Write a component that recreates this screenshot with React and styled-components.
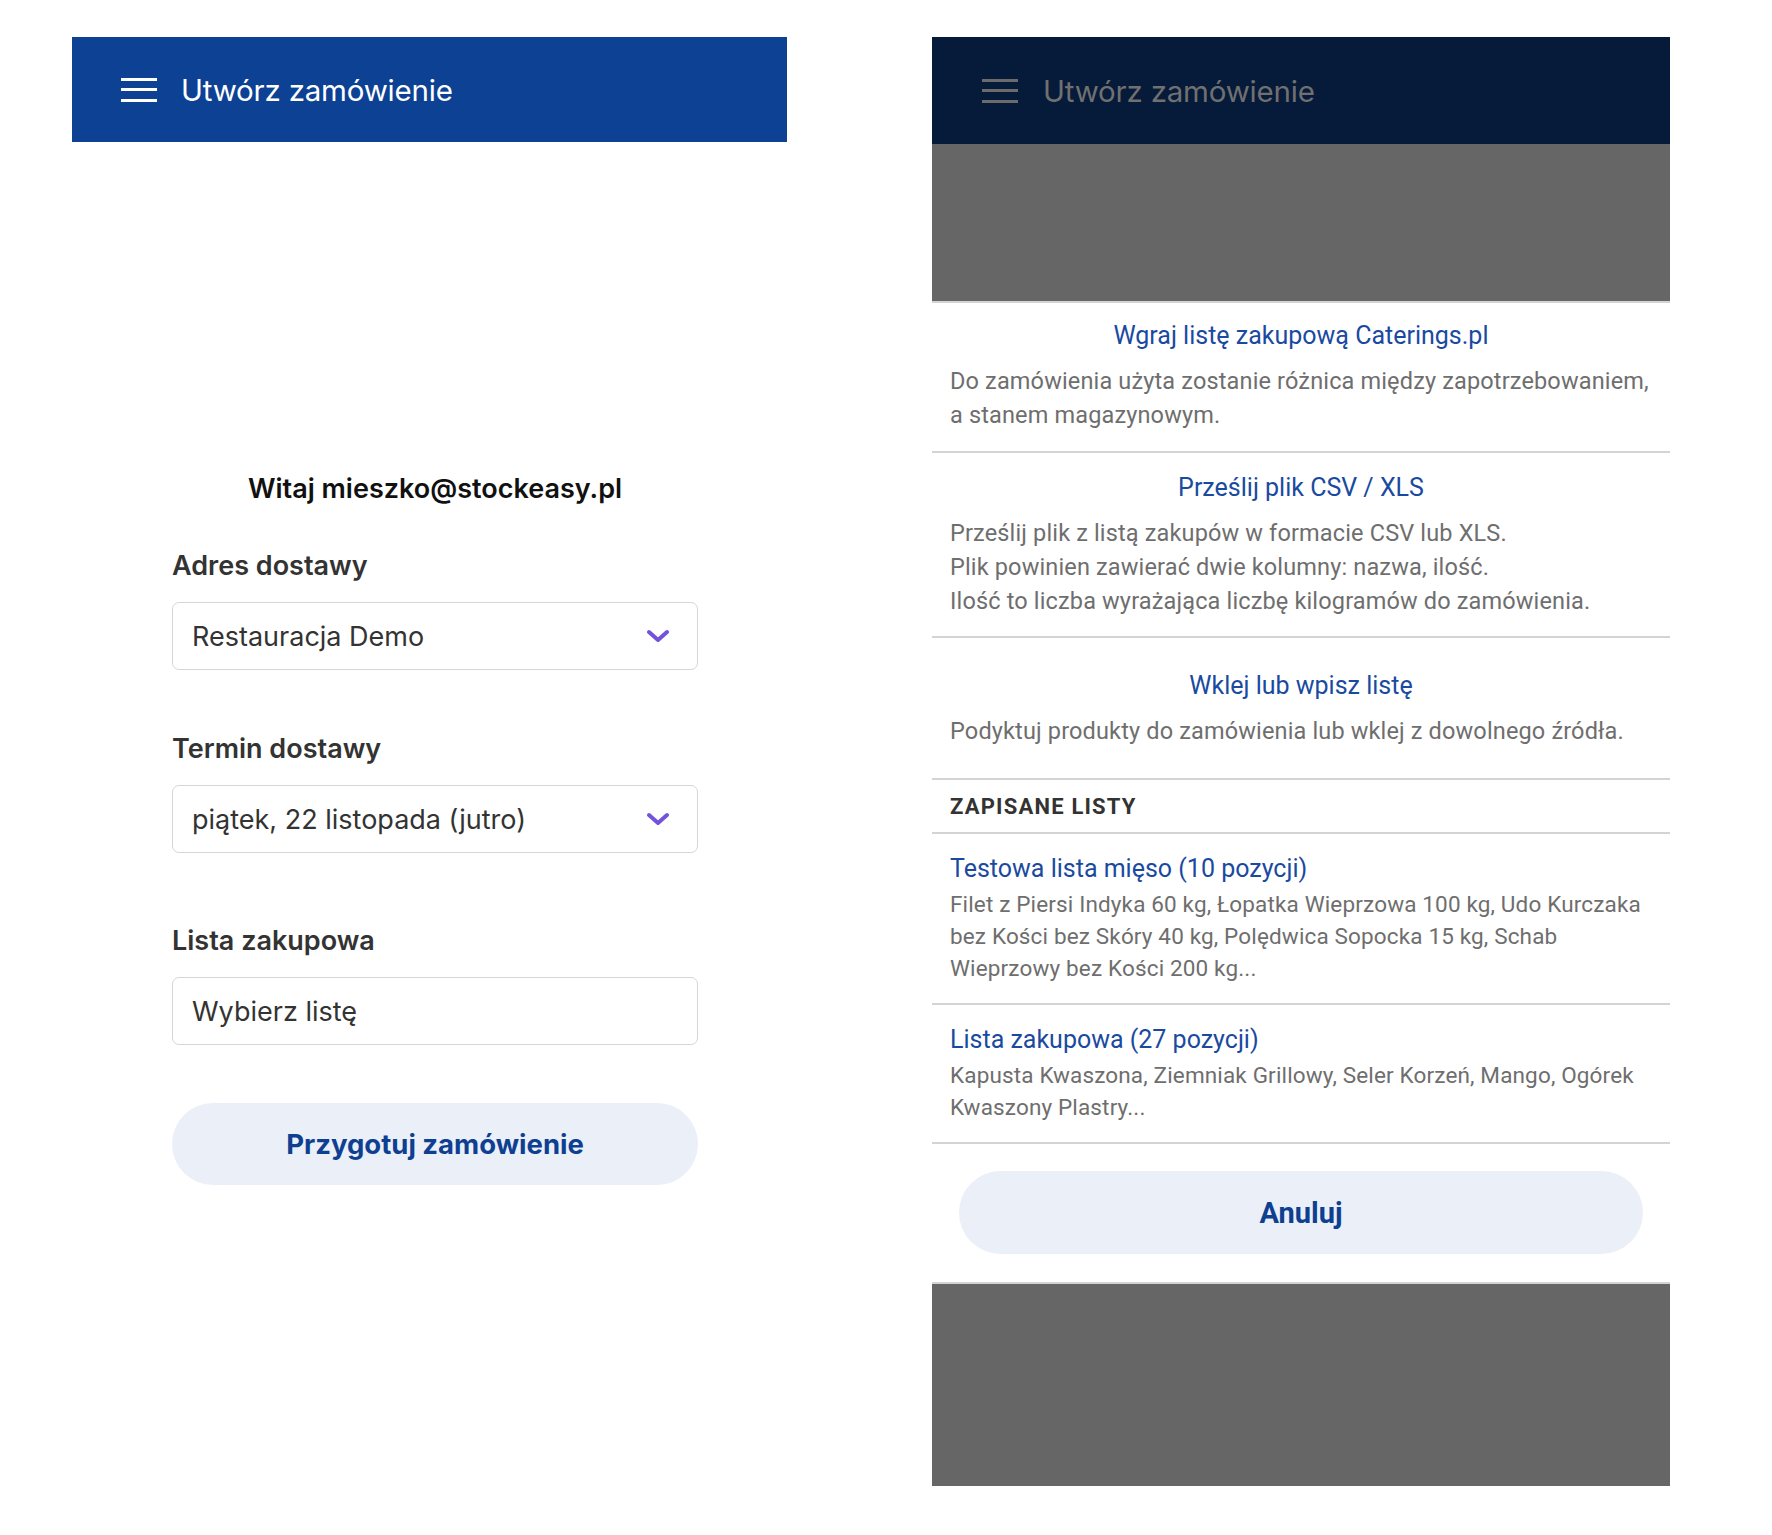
import React from "react";
import styled, { createGlobalStyle } from "styled-components";

const Global = createGlobalStyle`
  html, body { margin: 0; padding: 0; background: #ffffff; }
  body { font-family: Inter, "Noto Sans", sans-serif; -webkit-font-smoothing: antialiased; }
  * { box-sizing: border-box; }
`;

const Page = styled.div`
  display: flex;
  align-items: flex-start;
  padding: 37px 0 0 72px;
  gap: 145px;
  width: 1772px;
  min-height: 1535px;
`;

const LeftPanel = styled.div`
  width: 715px;
  display: flex;
  flex-direction: column;
`;

const RightPanel = styled.div`
  width: 738px;
  display: flex;
  flex-direction: column;
`;

const AppBar = styled.header`
  height: ${(p) => p.$h}px;
  background: ${(p) => p.$bg};
  display: flex;
  align-items: center;
  padding-left: ${(p) => p.$pl}px;
  gap: ${(p) => p.$gap}px;
`;

const Burger = styled.div`
  width: 36px;
  height: 24px;
  display: flex;
  flex-direction: column;
  justify-content: space-between;
  & > span {
    display: block;
    height: 3px;
    background: ${(p) => p.$color};
  }
`;

const AppTitle = styled.h1`
  margin: 0;
  font-family: Inter, sans-serif;
  font-weight: 400;
  font-size: 29.5px;
  letter-spacing: -0.2px;
  color: ${(p) => p.$color};
`;

const Form = styled.div`
  width: 526px;
  margin-left: 100px;
  padding-top: 331px;
  display: flex;
  flex-direction: column;
`;

const Welcome = styled.div`
  text-align: center;
  font-size: 27px;
  line-height: 32px;
  font-weight: 600;
  color: #111;
`;

const Label = styled.div`
  margin-top: ${(p) => p.$mt}px;
  font-size: 27px;
  line-height: 30px;
  font-weight: 600;
  color: #333;
`;

const Field = styled.div`
  margin-top: 21px;
  height: 68px;
  border: 1.5px solid #d6d6d6;
  border-radius: 7px;
  display: flex;
  align-items: center;
  justify-content: space-between;
  padding: 0 28px 0 19px;
  font-size: 27px;
  color: #333;
`;

const PrimaryButton = styled.button`
  margin-top: ${(p) => p.$mt}px;
  margin-left: ${(p) => p.$mx}px;
  margin-right: ${(p) => p.$mx}px;
  height: ${(p) => p.$h}px;
  border: none;
  border-radius: 42px;
  background: #ebeff8;
  color: #0e3f91;
  font-family: ${(p) => p.$font};
  font-weight: 700;
  font-size: ${(p) => p.$fs}px;
  cursor: pointer;
`;

const Overlay = styled.div`
  height: ${(p) => p.$h}px;
  margin-top: ${(p) => p.$mt || 0}px;
  background: #666666;
  border-${(p) => p.$side}: 2px solid #d4d4d4;
`;

const Section = styled.div`
  padding: ${(p) => p.$pt}px 18px ${(p) => p.$pb}px;
  border-bottom: 2px solid #d4d4d4;
  text-align: ${(p) => (p.$center ? "center" : "left")};
`;

const LinkTitle = styled.div`
  font-family: Roboto, sans-serif;
  font-size: 25px;
  line-height: 30px;
  color: #1a4a9f;
`;

const Desc = styled.div`
  margin-top: ${(p) => p.$mt}px;
  font-family: Roboto, sans-serif;
  font-size: ${(p) => p.$fs}px;
  line-height: ${(p) => p.$lh}px;
  color: #6e6e6e;
  text-align: left;
  letter-spacing: 0.15px;
`;

const SectionHeader = styled.div`
  height: 54px;
  display: flex;
  align-items: center;
  padding: 0 18px;
  border-bottom: 2px solid #d4d4d4;
  font-family: Roboto, sans-serif;
  font-weight: 700;
  font-size: 22px;
  letter-spacing: 1.2px;
  color: #333;
`;

const Chevron = () => (
  <svg width="22" height="16" viewBox="0 0 22 16">
    <path d="M2 4 L11 12 L20 4" fill="none" stroke="#7452dc" strokeWidth="4" strokeLinecap="round" strokeLinejoin="round" />
  </svg>
);

const BurgerIcon = ({ color }) => (
  <Burger $color={color}>
    <span />
    <span />
    <span />
  </Burger>
);

export default function App() {
  return (
    <>
      <Global />
      <Page>
        <LeftPanel>
          <AppBar $h={105} $bg="#0d4194" $pl={49} $gap={24}>
            <BurgerIcon color="#ffffff" />
            <AppTitle $color="#ffffff">Utwórz zamówienie</AppTitle>
          </AppBar>
          <Form>
            <Welcome>Witaj mieszko@stockeasy.pl</Welcome>
            <Label $mt={46}>Adres dostawy</Label>
            <Field>
              <span>Restauracja Demo</span>
              <Chevron />
            </Field>
            <Label $mt={64}>Termin dostawy</Label>
            <Field>
              <span>piątek, 22 listopada (jutro)</span>
              <Chevron />
            </Field>
            <Label $mt={73}>Lista zakupowa</Label>
            <Field>
              <span>Wybierz listę</span>
            </Field>
            <PrimaryButton $mt={58} $mx={0} $h={82} $fs={27.5} $font="Inter, sans-serif">
              Przygotuj zamówienie
            </PrimaryButton>
          </Form>
        </LeftPanel>

        <RightPanel>
          <AppBar $h={107} $bg="#061a3a" $pl={50} $gap={25}>
            <BurgerIcon color="#6b6b6b" />
            <AppTitle $color="#707070">Utwórz zamówienie</AppTitle>
          </AppBar>
          <Overlay $h={159} $side="bottom" />
          <Section $center $pt={18} $pb={19}>
            <LinkTitle>Wgraj listę zakupową Caterings.pl</LinkTitle>
            <Desc $mt={13} $lh={34} $fs={23.5}>
              Do zamówienia użyta zostanie różnica między zapotrzebowaniem, a stanem magazynowym.
            </Desc>
          </Section>
          <Section $center $pt={20} $pb={18}>
            <LinkTitle>Prześlij plik CSV / XLS</LinkTitle>
            <Desc $mt={13} $lh={34} $fs={23.5}>
              Prześlij plik z listą zakupów w formacie CSV lub XLS.
              <br />
              Plik powinien zawierać dwie kolumny: nazwa, ilość.
              <br />
              Ilość to liczba wyrażająca liczbę kilogramów do zamówienia.
            </Desc>
          </Section>
          <Section $center $pt={33} $pb={30}>
            <LinkTitle>Wklej lub wpisz listę</LinkTitle>
            <Desc $mt={13} $lh={34} $fs={23.5}>
              Podyktuj produkty do zamówienia lub wklej z dowolnego źródła.
            </Desc>
          </Section>
          <SectionHeader>ZAPISANE LISTY</SectionHeader>
          <Section $pt={20} $pb={19}>
            <LinkTitle>Testowa lista mięso (10 pozycji)</LinkTitle>
            <Desc $mt={4} $lh={32} $fs={22.5}>
              Filet z Piersi Indyka 60 kg, Łopatka Wieprzowa 100 kg, Udo Kurczaka bez Kości bez Skóry 40 kg, Polędwica Sopocka 15 kg, Schab Wieprzowy bez Kości 200 kg...
            </Desc>
          </Section>
          <Section $pt={20} $pb={19}>
            <LinkTitle>Lista zakupowa (27 pozycji)</LinkTitle>
            <Desc $mt={4} $lh={32} $fs={22.5}>
              Kapusta Kwaszona, Ziemniak Grillowy, Seler Korzeń, Mango, Ogórek Kwaszony Plastry...
            </Desc>
          </Section>
          <PrimaryButton $mt={27} $mx={27} $h={83} $fs={29} $font="Roboto, sans-serif">
            Anuluj
          </PrimaryButton>
          <Overlay $h={204} $mt={28} $side="top" />
        </RightPanel>
      </Page>
    </>
  );
}
